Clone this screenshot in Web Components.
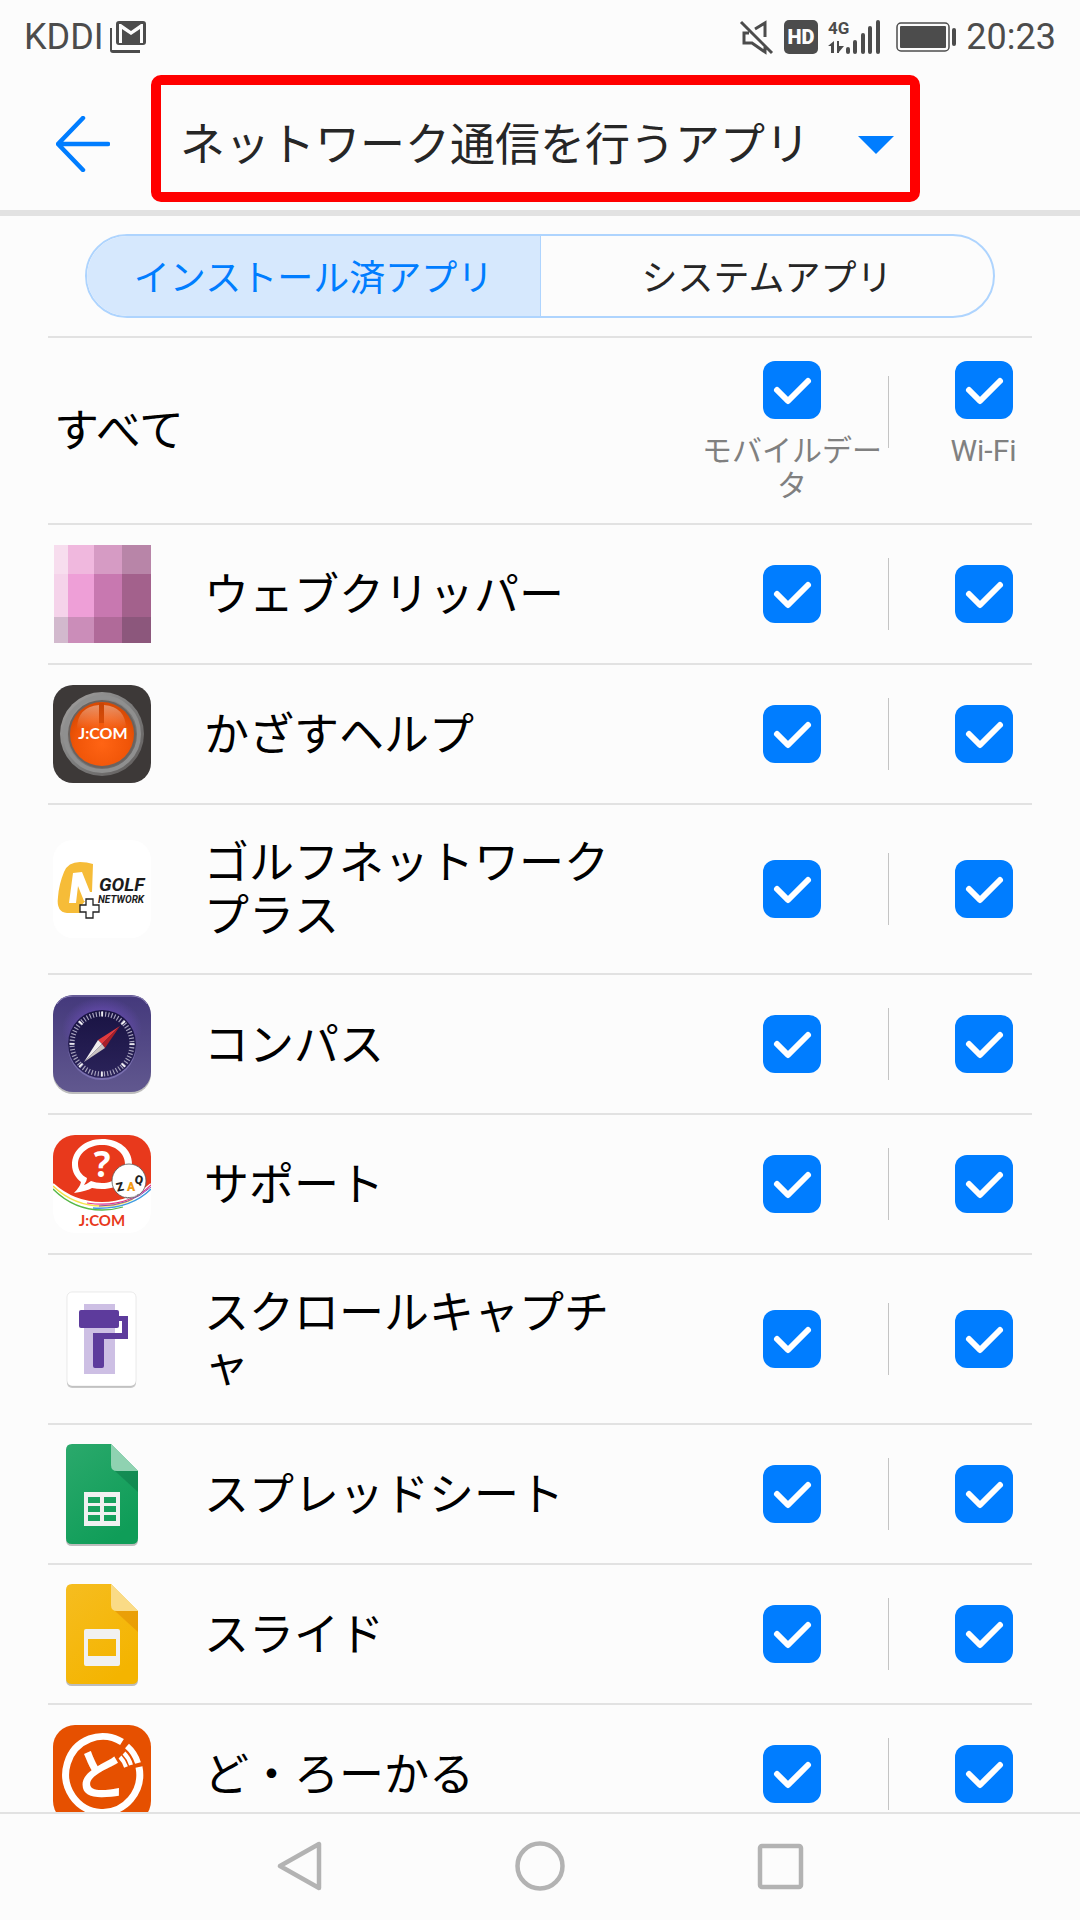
<!DOCTYPE html>
<html lang="ja">
<head>
<meta charset="utf-8">
<meta name="viewport" content="width=device-width, initial-scale=1">
<title>ネットワーク通信を行うアプリ</title>
<style>
  body {
    margin: 0;
    background: #fcfcfc;
    color: #000;
    font-family: Roboto, "Noto Sans CJK JP", sans-serif;
  }
</style>
</head>
<body>
<network-apps-page></network-apps-page>

<script>
const ICONS = {
  clipper: `
    <g shape-rendering="crispEdges">
      <path fill="#f7ddee" d="M1 0h14v29H1z"/><path fill="#f0b8de" d="M15 0h26v29H15z"/>
      <path fill="#d69bc4" d="M41 0h28v29H41z"/><path fill="#b885a8" d="M69 0h29v29H69z"/>
      <path fill="#f5d3ea" d="M1 29h14v43H1z"/><path fill="#ee9fd7" d="M15 29h26v43H15z"/>
      <path fill="#c878b0" d="M41 29h28v43H41z"/><path fill="#a3618c" d="M69 29h29v43H69z"/>
      <path fill="#d2b9cd" d="M1 72h14v26H1z"/><path fill="#cb8db9" d="M15 72h26v26H15z"/>
      <path fill="#b06a99" d="M41 72h28v26H41z"/><path fill="#8c577c" d="M69 72h29v26H69z"/>
    </g>`,
  kazasu: `
    <defs>
      <linearGradient id="ring" x1="0" y1="0" x2="1" y2="1">
        <stop offset="0" stop-color="#a5a3a2"/><stop offset=".5" stop-color="#7d7d7d"/><stop offset="1" stop-color="#5e5a59"/>
      </linearGradient>
      <radialGradient id="orange" cx=".5" cy=".65" r=".6">
        <stop offset="0" stop-color="#ff6414"/><stop offset=".7" stop-color="#f05508"/><stop offset="1" stop-color="#d94a04"/>
      </radialGradient>
      <linearGradient id="gloss" x1="0" y1="0" x2="0" y2="1">
        <stop offset="0" stop-color="#fff" stop-opacity=".4"/><stop offset="1" stop-color="#fff" stop-opacity="0"/>
      </linearGradient>
    </defs>
    <rect width="98" height="98" rx="20" fill="#3d3938"/>
    <circle cx="49" cy="49" r="42" fill="url(#ring)"/>
    <circle cx="49" cy="49" r="37" fill="none" stroke="#8f8f8f" stroke-width="4"/>
    <circle cx="49" cy="49" r="34" fill="#6b625e"/>
    <circle cx="49" cy="49" r="32" fill="url(#orange)"/>
    <path d="M46 20Q24 22 24 44H46zM51 20Q73 22 73 44H51z" fill="url(#gloss)"/>
    <path d="M46 18h5v20h-5z" fill="#b84008" opacity=".5"/>
    <text x="50" y="54" text-anchor="middle" font-family="Lato, sans-serif" font-weight="700" font-size="16" fill="#fff">J:COM</text>`,
  golf: `
    <rect width="98" height="98" rx="20" fill="#fff"/>
    <path fill="#f6bc38" d="M40 24Q34 22 27 22Q15 22 11 32Q6 44 5 57Q3 72 14 73H27L28 66L33 60L39 52z"/>
    <path fill="#fff" d="M20 33L29 32L37 52H41L40 61H31L25 46L23 63H16z"/>
    <path fill="#fff" stroke="#222" stroke-width="1.3" d="M33 59h7v6h6v7h-6v6h-7v-6h-6v-7h6z"/>
    <g font-family="Roboto, sans-serif" font-weight="700" font-style="italic" fill="#1c1c1c">
      <text x="46" y="51" font-size="19">GOLF</text>
      <text x="45" y="63" font-size="10">NETWORK</text>
    </g>`,
  compass: `
    <defs>
      <linearGradient id="violet" x1="0" y1="0" x2="0" y2="1">
        <stop offset="0" stop-color="#44397c"/><stop offset="1" stop-color="#61588f"/>
      </linearGradient>
      <radialGradient id="glow" cx=".5" cy=".5" r=".5">
        <stop offset=".5" stop-color="#7350c4"/><stop offset="1" stop-color="#7350c4" stop-opacity="0"/>
      </radialGradient>
      <linearGradient id="dial" x1="0" y1="0" x2="0" y2="1">
        <stop offset="0" stop-color="#191343"/><stop offset="1" stop-color="#2b235a"/>
      </linearGradient>
    </defs>
    <rect y="2" width="98" height="97" rx="20" fill="#000" opacity=".25"/>
    <rect width="98" height="97" rx="20" fill="url(#violet)"/>
    <path d="M4 9Q9 1 20 1H78Q89 1 94 9" fill="none" stroke="#8a80b5"/>
    <ellipse cx="49" cy="34" rx="40" ry="32" fill="url(#glow)" opacity=".6"/>
    <circle cx="49" cy="51" r="34" fill="#7a70b0"/>
    <circle cx="49" cy="49" r="34" fill="url(#dial)"/>
    <circle cx="49" cy="49" r="30" fill="none" stroke="#a7a3bd" stroke-width="5" pathLength="240" stroke-dasharray="1.5 2.5"/>
    <circle cx="49" cy="49" r="30" fill="none" stroke="#fff" stroke-width="5" pathLength="240" stroke-dasharray="2 28" stroke-dashoffset="1"/>
    <path fill="#e33b3e" d="M67 31L45 45L49 49z"/><path fill="#a81f28" d="M67 31L52 53L49 49z"/>
    <path fill="#f1eeee" d="M31 67L45 45L49 49z"/><path fill="#c9c3c1" d="M31 67L52 53L49 49z"/>`,
  support: `
    <defs><clipPath id="tile"><rect width="98" height="98" rx="22"/></clipPath></defs>
    <g clip-path="url(#tile)">
      <path fill="#fff" d="M0 0h98v98H0z"/>
      <path fill="#e8391c" d="M0 0h98v49Q77 68 49 68T0 49z"/>
      <g fill="none">
        <path stroke="#fff" stroke-width="2" d="M0 49Q21 68 49 68T98 49"/>
        <path stroke="#e4358c" stroke-width="1.2" d="M34 68Q74 74 98 50"/>
        <path stroke="#f5e24a" stroke-width="1.5" d="M0 51Q21 71 49 71Q66 71 80 64"/>
        <path stroke="#8a4fb0" stroke-width="1" d="M46 71Q77 71 98 52"/>
        <path stroke="#3f9be0" stroke-width="1.5" d="M40 73Q77 75 98 54"/>
        <path stroke="#57b848" stroke-width="1.3" d="M0 54Q21 75 49 75Q60 75 70 72"/>
      </g>
    </g>
    <path fill="#fff" d="M49 4C32 4 19 15 19 30C19 37 23 43 28 47Q27 52 21 58Q34 56 39 53Q44 54 49 54C66 54 79 44 79 29S66 4 49 4zM49 10C62 10 72 18 72 29S62 48 49 48Q43 48 38 46Q34 49 31 50Q34 46 34 43C28 40 25 35 25 29C25 18 36 10 49 10z"/>
    <text x="49" y="42" text-anchor="middle" font-family="Noto Sans, sans-serif" font-weight="700" font-size="35" fill="#fff">?</text>
    <g fill="#fff" stroke="#555" stroke-width=".8">
      <circle cx="76" cy="46" r="17"/>
      <path d="M71 59L74 63L86 59"/>
    </g>
    <circle cx="76" cy="46" r="16" fill="#fff"/>
    <g font-family="Roboto, sans-serif" font-weight="900" font-size="12" text-anchor="middle">
      <text x="67" y="56" transform="rotate(-12 67 52)" fill="#222">Z</text>
      <text x="78" y="56" fill="#f39a12">A</text>
      <text x="86" y="49" transform="rotate(12 86 45)" fill="#222">Q</text>
    </g>
    <text x="49" y="91" text-anchor="middle" font-family="Lato, sans-serif" font-weight="700" font-size="15" fill="#e8391c">J:COM</text>`,
  scroll: `
    <rect x="14" y="4" width="69" height="94" rx="5" fill="#000" opacity=".2"/>
    <rect x="14" y="2" width="69" height="94" rx="5" fill="#fff" stroke="#000" stroke-opacity=".08"/>
    <path fill="#cdbfe4" d="M31 14h31v70H31z"/>
    <rect x="26" y="20" width="40" height="18" rx="2" fill="#5d3b9c"/>
    <path fill="#5d3b9c" d="M66 26h9v23H51v27q0 2-2 2h-7q-2 0-2-2V43h29V31h-3z"/>`,
  sheets: `
    <defs><linearGradient id="green" x1="0" y1="0" x2=".6" y2="1">
      <stop offset="0" stop-color="#2ba96c"/><stop offset="1" stop-color="#0f9d58"/>
    </linearGradient></defs>
    <path fill="#000" opacity=".25" d="M19 1h39l27 27v67q0 6-6 6H19q-6 0-6-6V7q0-6 6-6z"/>
    <path fill="url(#green)" d="M19-1h39l27 27v67q0 6-6 6H19q-6 0-6-6V5q0-6 6-6z"/>
    <path fill="#0b6b40" opacity=".4" d="M62 26h23v21z"/>
    <path fill="#8fd2b1" d="M58-1l27 27H64q-6 0-6-6z"/>
    <path fill="#f1f1f1" fill-rule="evenodd" d="M31 47h36v34H31zM35 52v6h12v-6zM51 52v6h12v-6zM35 61v6h12v-6zM51 61v6h12v-6zM35 70v6h12v-6zM51 70v6h12v-6z"/>`,
  slides: `
    <defs><linearGradient id="yellow" x1="0" y1="0" x2=".6" y2="1">
      <stop offset="0" stop-color="#f6bd20"/><stop offset="1" stop-color="#f4b400"/>
    </linearGradient></defs>
    <path fill="#000" opacity=".25" d="M19 1h39l27 27v67q0 6-6 6H19q-6 0-6-6V7q0-6 6-6z"/>
    <path fill="url(#yellow)" d="M19-1h39l27 27v67q0 6-6 6H19q-6 0-6-6V5q0-6 6-6z"/>
    <path fill="#d97a00" opacity=".4" d="M62 26h23v21z"/>
    <path fill="#fadb86" d="M58-1l27 27H64q-6 0-6-6z"/>
    <path fill="#f1f1f1" fill-rule="evenodd" d="M33 44h32q2 0 2 2v33q0 2-2 2H33q-2 0-2-2V46q0-2 2-2zM35 54v17h28V54z"/>`,
  dolocal: `
    <rect width="98" height="98" rx="22" fill="#e65000"/>
    <g fill="none" stroke="#fff">
      <path stroke-width="7" d="M69 17A37 38 0 1 0 86 42"/>
      <path stroke-width="6" d="M74 21Q82 28 85 38"/>
      <path stroke-width="4" d="M67 32Q71 36 73 42M71 28Q76 33 78 40"/>
    </g>
    <text x="47" y="70" text-anchor="middle" font-family="Noto Sans CJK JP, sans-serif" font-weight="700" font-size="54" fill="#fff">と</text>`
};

const APPS = [
  ['clipper', 'ウェブクリッパー'],
  ['kazasu', 'かざすヘルプ'],
  ['golf', 'ゴルフネットワークプラス'],
  ['compass', 'コンパス'],
  ['support', 'サポート'],
  ['scroll', 'スクロールキャプチャ'],
  ['sheets', 'スプレッドシート'],
  ['slides', 'スライド'],
  ['dolocal', 'ど・ろーかる']
];

class StatusBar extends HTMLElement {
  connectedCallback() {
    this.attachShadow({ mode: 'open' });
    this.shadowRoot.innerHTML = `
      <style>
        :host {
          display: flex;
          align-items: center;
          justify-content: space-between;
          box-sizing: border-box;
          height: 72px;
          padding: 2px 24px 0;
          color: #4c4c4c;
          font-size: 36px;
          line-height: 42px;
        }
        .group { display: flex; align-items: center; gap: 10px; }
        .group.left { gap: 6px; }
        svg { display: block; overflow: visible; fill: currentColor; }
      </style>
      <div class="group left">
        <span>KDDI</span>
        <svg width="36" height="32" viewBox="0 0 36 32" aria-hidden="true">
          <path d="M0 7h2v22h28v3H3q-3 0-3-3z"/>
          <path fill-rule="evenodd" d="M9 0h24q3 0 3 3v18q0 3-3 3H9q-3 0-3-3V3q0-3 3-3zM9 3v19h3V8l9 6 9-6v14h3V3h-2l-10 7L11 3z"/>
        </svg>
      </div>
      <div class="group">
        <svg width="34" height="34" viewBox="0 0 34 34" aria-hidden="true">
          <path fill="none" stroke="currentColor" stroke-width="3" d="M1 2L32 33M9 13H4v10h8l13 9V26M15 9L25 3V17"/>
        </svg>
        <svg width="34" height="34" viewBox="0 0 34 34">
          <rect width="34" height="34" rx="5"/>
          <text x="17" y="24" text-anchor="middle" font-family="Roboto, sans-serif" font-weight="900" font-size="20" fill="#fcfcfc">HD</text>
        </svg>
        <svg width="58" height="34" viewBox="0 0 58 34">
          <text x="0" y="14" font-family="Roboto, sans-serif" font-weight="700" font-size="17">4G</text>
          <path d="M6 21v12H3v-7H0zM9 21h2v5h5l-5 6v1H9z"/>
          <rect x="18" y="27" width="4" height="7" rx="2"/><rect x="25" y="20" width="4" height="14" rx="2"/>
          <rect x="33" y="13" width="4" height="21" rx="2"/><rect x="40" y="6" width="4" height="28" rx="2"/>
          <rect x="48" y="0" width="4" height="34" rx="2"/>
        </svg>
        <svg width="60" height="30" viewBox="0 0 60 30" aria-hidden="true">
          <rect x="1" y="1" width="52" height="28" rx="4" fill="none" stroke="currentColor" stroke-width="1.5"/>
          <rect x="4" y="4" width="46" height="22" rx="1"/>
          <rect x="56" y="6" width="4" height="18" rx="2"/>
        </svg>
        <time>20:23</time>
      </div>
    `;
  }
}

class AppHeader extends HTMLElement {
  connectedCallback() {
    this.attachShadow({ mode: 'open' });
    this.shadowRoot.innerHTML = `
      <style>
        :host {
          display: flex;
          align-items: flex-start;
          gap: 41px;
          box-sizing: border-box;
          height: 144px;
          padding: 3px 160px 0 56px;
          border-bottom: 6px solid #e2e2e2;
        }
        button {
          border: 0;
          padding: 0;
          background: none;
          height: 138px;
          width: 54px;
          cursor: pointer;
        }
        svg { display: block; }
        .picker {
          flex: 1;
          min-width: 0;
          display: grid;
          align-items: center;
          box-sizing: border-box;
          height: 127px;
          padding-top: 13px;
          border: 10px solid #f00;
          border-radius: 10px;
        }
        select {
          grid-area: 1 / 1;
          appearance: none;
          width: 100%;
          height: 94px;
          margin: 0;
          padding: 0 60px 0 19px;
          border: 0;
          background: none;
          color: #262626;
          font: inherit;
          font-size: 45px;
        }
        .picker svg {
          grid-area: 1 / 1;
          justify-self: end;
          margin-right: 16px;
          pointer-events: none;
        }
      </style>
      <button type="button" aria-label="戻る">
        <svg width="54" height="56" viewBox="0 0 54 56" fill="none" stroke="#007dff" stroke-width="4.5" stroke-linecap="round" stroke-linejoin="round">
          <path d="M27 2L2 28L27 54M3 28H52"/>
        </svg>
      </button>
      <div class="picker">
        <select aria-label="表示するアプリ">
          <option selected>ネットワーク通信を行うアプリ</option>
        </select>
        <svg width="36" height="18" viewBox="0 0 36 18" fill="#007dff" aria-hidden="true"><path d="M0 0h36L18 18z"/></svg>
      </div>
    `;
  }
}

class SegmentTabs extends HTMLElement {
  connectedCallback() {
    this.attachShadow({ mode: 'open' });
    this.shadowRoot.innerHTML = `
      <style>
        :host { display: block; padding: 18px 85px; }
        .tabs {
          display: grid;
          grid-template-columns: 1fr 1fr;
          box-sizing: border-box;
          height: 84px;
          border: 2px solid #aed4fe;
          border-radius: 42px;
          overflow: hidden;
        }
        button {
          border: 0;
          padding: 0 0 2px;
          background: none;
          color: #262626;
          font: inherit;
          font-size: 36px;
          cursor: pointer;
        }
        button + button { border-left: 1px solid #aed4fe; }
        button[aria-selected="true"] { background: #d6e8fd; color: #007dff; }
      </style>
      <div class="tabs" role="tablist">
        <button type="button" role="tab" aria-selected="true">インストール済アプリ</button>
        <button type="button" role="tab" aria-selected="false">システムアプリ</button>
      </div>
    `;
    const tabs = this.shadowRoot.querySelectorAll('button');
    tabs.forEach((tab) => {
      tab.addEventListener('click', () => {
        tabs.forEach((t) => t.setAttribute('aria-selected', String(t === tab)));
      });
    });
  }
}

// Tick box with an optional caption under it
class TickBox extends HTMLElement {
  connectedCallback() {
    const caption = this.getAttribute('caption');
    this.attachShadow({ mode: 'open' });
    this.shadowRoot.innerHTML = `
      <style>
        :host { display: block; }
        label {
          display: flex;
          flex-direction: column;
          align-items: center;
          gap: 14px;
          color: #808080;
          font-size: 30px;
          line-height: 35px;
          text-align: center;
        }
        .box { display: grid; }
        input {
          grid-area: 1 / 1;
          appearance: none;
          width: 58px;
          height: 58px;
          margin: 0;
          border: 3px solid #b3b3b3;
          border-radius: 12px;
        }
        input:checked { border: 0; background: #007dff; }
        svg {
          grid-area: 1 / 1;
          pointer-events: none;
          visibility: hidden;
        }
        input:checked + svg { visibility: visible; }
      </style>
      <label>
        <span class="box">
          <input type="checkbox" checked>
          <svg width="58" height="58" viewBox="0 0 58 58" fill="none" stroke="#fff" stroke-width="6" stroke-linecap="round" stroke-linejoin="round">
            <path d="M14 29L25 40L45 20"/>
          </svg>
        </span>
        ${caption ? `<span>${caption}</span>` : ''}
      </label>
    `;
    this.input = this.shadowRoot.querySelector('input');
    if (!caption) {
      this.input.setAttribute('aria-label', this.getAttribute('name'));
    }
    this.input.addEventListener('change', () => {
      this.dispatchEvent(new CustomEvent('tick', { bubbles: true, composed: true }));
    });
  }
}

class AppRow extends HTMLElement {
  connectedCallback() {
    const icon = this.getAttribute('icon');
    const name = this.textContent;
    this.attachShadow({ mode: 'open' });
    this.shadowRoot.innerHTML = `
      <style>
        :host {
          display: grid;
          grid-template-columns: 1fr 192px 1px 143px;
          align-items: center;
          min-height: 138px;
          border-bottom: 2px solid #e2e2e2;
        }
        .app {
          display: flex;
          align-items: center;
          gap: 53px;
          padding: 16px 60px 16px 5px;
        }
        .app svg { flex: none; overflow: visible; }
        .name {
          padding: 16px 0 14px;
          font-size: 45px;
          line-height: 53px;
          font-kerning: none;
          line-break: anywhere;
        }
        .line { height: 72px; background: #c4c4c4; }
        tick-box { padding: 0 6px; }
        .wifi { padding: 0 0 0 46px; }
        :host([all]) { align-items: start; padding-bottom: 20px; }
        :host([all]) .app { align-self: center; padding: 20px 0 0 6px; }
        :host([all]) .name { font-kerning: normal; }
        :host([all]) .line { margin-top: 38px; }
        :host([all]) tick-box { padding-top: 23px; }
      </style>
      <div class="app">
        ${icon ? `<svg width="98" height="98" viewBox="0 0 98 98" aria-hidden="true">${ICONS[icon]}</svg>` : ''}
        <span class="name"><slot></slot></span>
      </div>
      <tick-box class="mobile" name="${name} モバイルデータ" ${icon ? '' : 'caption="モバイルデータ"'}></tick-box>
      <div class="line"></div>
      <tick-box class="wifi" name="${name} Wi-Fi" ${icon ? '' : 'caption="Wi-Fi"'}></tick-box>
    `;
  }
}

class AppList extends HTMLElement {
  connectedCallback() {
    this.attachShadow({ mode: 'open' });
    this.shadowRoot.innerHTML = `
      <style>
        :host { display: block; margin: 0 48px; border-top: 2px solid #e2e2e2; }
      </style>
      <app-row all>すべて</app-row>
      ${APPS.map(([icon, name]) => `<app-row icon="${icon}">${name}</app-row>`).join('')}
    `;

    // The top row switches a whole column
    const rows = [...this.shadowRoot.querySelectorAll('app-row')];
    ['.mobile', '.wifi'].forEach((column) => {
      const boxes = rows.map((row) => row.shadowRoot.querySelector(column));
      const [all, ...rest] = boxes;
      all.addEventListener('tick', () => {
        rest.forEach((box) => { box.input.checked = all.input.checked; });
      });
      rest.forEach((box) => box.addEventListener('tick', () => {
        all.input.checked = rest.every((b) => b.input.checked);
      }));
    });
  }
}

class NavBar extends HTMLElement {
  connectedCallback() {
    this.attachShadow({ mode: 'open' });
    this.shadowRoot.innerHTML = `
      <style>
        :host {
          display: grid;
          grid-template-columns: repeat(3, 240px);
          justify-content: center;
          height: 106px;
          border-top: 2px solid #e2e2e2;
        }
        button {
          display: grid;
          place-items: center;
          border: 0;
          padding: 0 0 2px;
          background: none;
        }
        svg { fill: none; stroke: #b3b3b3; stroke-width: 4.5; stroke-linejoin: round; }
      </style>
      <button type="button" aria-label="戻る">
        <svg width="50" height="50" viewBox="0 0 50 50"><path d="M44 3V47L5 25z"/></svg>
      </button>
      <button type="button" aria-label="ホーム">
        <svg width="50" height="50" viewBox="0 0 50 50"><circle cx="25" cy="25" r="22.5"/></svg>
      </button>
      <button type="button" aria-label="履歴">
        <svg width="50" height="50" viewBox="0 0 50 50"><rect x="5" y="5" width="41" height="41" rx="2"/></svg>
      </button>
    `;
  }
}

class NetworkAppsPage extends HTMLElement {
  connectedCallback() {
    this.attachShadow({ mode: 'open' });
    this.shadowRoot.innerHTML = `
      <style>
        :host { display: flex; flex-direction: column; height: 100vh; }
        status-bar, app-header, segment-tabs, nav-bar { flex: none; }
        main {
          flex: 1;
          min-height: 0;
          overflow-y: auto;
          scrollbar-width: none;
        }
      </style>
      <status-bar></status-bar>
      <app-header></app-header>
      <segment-tabs></segment-tabs>
      <main><app-list></app-list></main>
      <nav-bar></nav-bar>
    `;
  }
}

customElements.define('status-bar', StatusBar);
customElements.define('app-header', AppHeader);
customElements.define('segment-tabs', SegmentTabs);
customElements.define('tick-box', TickBox);
customElements.define('app-row', AppRow);
customElements.define('app-list', AppList);
customElements.define('nav-bar', NavBar);
customElements.define('network-apps-page', NetworkAppsPage);
</script>
</body>
</html>
